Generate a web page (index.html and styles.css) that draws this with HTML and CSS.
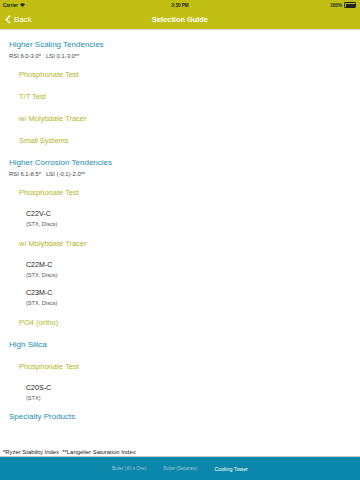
FILE: index.html
```html
<!DOCTYPE html>
<html lang="en">
<head>
  <meta charset="UTF-8">
  <meta name="viewport" content="width=device-width, initial-scale=1.0">
  <title>Selection Guide</title>
  <link rel="stylesheet" href="styles.css">
</head>
<body>

<div id="app">
  <!-- Header -->
  <div id="header">
    <div class="status-bar">
      <div class="status-left">
        <span>Carrier</span>
        <svg class="wifi" width="5" height="4" viewBox="0 0 10 8"><path d="M5 8 L0 2.5 A7.5 7.5 0 0 1 10 2.5 Z" fill="#222"/></svg>
      </div>
      <div class="status-time">3:30 PM</div>
      <div class="status-right">
        <span>100%</span>
        <span class="battery"><span class="battery-fill"></span></span>
      </div>
    </div>
    <div class="nav-bar">
      <div class="back">
        <svg width="6" height="9" viewBox="0 0 6 9"><path d="M5 0.8 L1.3 4.5 L5 8.2" fill="none" stroke="#fff" stroke-width="1.4"/></svg>
        <span>Back</span>
      </div>
      <div class="nav-title">Selection Guide</div>
    </div>
  </div>

  <!-- Guide list -->
  <div id="content">
    <div class="group-head">
      <div class="group-title">Higher Scaling Tendencies</div>
      <div class="ratio">RSI 6.0-3.0*&nbsp;&nbsp; LSI 0.1-3.0**</div>
    </div>
    <div class="item">Phosphonate Test</div>
    <div class="item">T/T Test</div>
    <div class="item">w/ Molybdate Tracer</div>
    <div class="item">Small Systems</div>

    <div class="group-head">
      <div class="group-title">Higher Corrosion Tendencies</div>
      <div class="ratio">RSI 6.1-8.5*&nbsp;&nbsp; LSI (-0.1)-2.0**</div>
    </div>
    <div class="item">Phosphonate Test</div>
    <div class="product">
      <div class="product-name">C22V-C</div>
      <div class="product-sub">(STX, Discs)</div>
    </div>
    <div class="item">w/ Molybdate Tracer</div>
    <div class="product">
      <div class="product-name">C22M-C</div>
      <div class="product-sub">(STX, Discs)</div>
    </div>
    <div class="product">
      <div class="product-name">C23M-C</div>
      <div class="product-sub">(STX, Discs)</div>
    </div>
    <div class="item">PO4 (ortho)</div>

    <div class="group-title single">High Silica</div>
    <div class="item">Phosphonate Test</div>
    <div class="product">
      <div class="product-name">C20S-C</div>
      <div class="product-sub">(STX)</div>
    </div>

    <div class="group-title single">Specialty Products</div>
  </div>

  <div id="footnote">*Ryzer Stability Index&nbsp; **Langelier Saturation Index</div>

  <!-- Tab bar -->
  <div id="tab-bar">
    <div class="tab">Boiler (All n One)</div>
    <div class="tab">Boiler (Separate)</div>
    <div class="tab active">Cooling Tower</div>
  </div>
</div>

</body>
</html>
```

FILE: styles.css
```css
body {
  margin: 0;
  font-family: "Liberation Sans", Arial, sans-serif;
  background-color: #ffffff;
}

#app {
  width: 360px;
  height: 480px;
  display: flex;
  flex-direction: column;
  overflow: hidden;
}

#header {
  background-color: #c1bf13;
  border-bottom: 1px solid #d4d4cc;
  height: 29px;
  flex-shrink: 0;
}

.status-bar {
  height: 10px;
  display: flex;
  justify-content: space-between;
  align-items: center;
  padding: 0 3px;
  font-size: 4.6px;
  font-weight: bold;
  color: #222;
  position: relative;
}

.status-left, .status-right {
  display: flex;
  align-items: center;
  gap: 2px;
}

.status-time {
  position: absolute;
  left: 0;
  right: 0;
  text-align: center;
}

.battery {
  width: 9px;
  height: 3px;
  border: 0.5px solid #222;
  border-radius: 1px;
  padding: 0.5px;
  display: inline-flex;
  margin-right: 1px;
}

.battery-fill {
  flex: 1;
  background-color: #222;
}

.nav-bar {
  height: 19px;
  display: flex;
  align-items: center;
  position: relative;
  color: #ffffff;
}

.back {
  display: flex;
  align-items: center;
  gap: 3px;
  padding-left: 5px;
  font-size: 7.8px;
}

.nav-title {
  position: absolute;
  left: 0;
  right: 0;
  text-align: center;
  font-size: 7.4px;
  font-weight: bold;
}

#content {
  flex: 1;
  padding-top: 4px;
}

.group-head {
  padding-top: 5px;
  padding-bottom: 3px;
}

.group-title {
  font-size: 8px;
  line-height: 12px;
  color: #1d8db5;
  padding-left: 9px;
}

.group-title.single {
  padding-top: 5px;
  padding-bottom: 5px;
}

.ratio {
  font-size: 5.9px;
  line-height: 10px;
  color: #444;
  padding-left: 9px;
}

.item {
  font-size: 7.5px;
  line-height: 22px;
  color: #b2b626;
  padding-left: 19px;
}

.product {
  padding: 4px 0 3.5px 26px;
}

.product-name {
  font-size: 7.1px;
  line-height: 12px;
  color: #1a1a1a;
}

.product-sub {
  font-size: 5.6px;
  line-height: 9px;
  color: #555;
}

#footnote {
  font-size: 5.9px;
  line-height: 8px;
  color: #222;
  padding-left: 3px;
}

#tab-bar {
  height: 23px;
  flex-shrink: 0;
  background-color: #0b87ac;
  border-top: 1px solid #b8c8cc;
  display: flex;
  justify-content: center;
  align-items: center;
  gap: 17px;
  padding-top: 0;
}

.tab {
  font-size: 4.5px;
  color: #9cc6d6;
}

.tab.active {
  font-size: 5.3px;
  color: #ffffff;
}
```
